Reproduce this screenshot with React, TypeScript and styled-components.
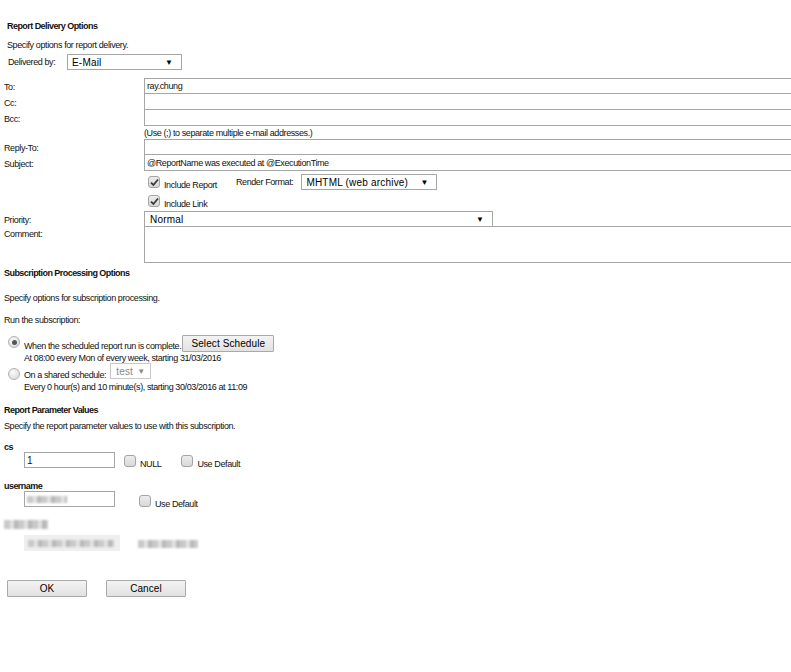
import styled, { createGlobalStyle } from 'styled-components';

const GlobalStyle = createGlobalStyle`
  html, body {
    margin: 0;
    padding: 0;
    background: #ffffff;
    overflow: hidden;
  }
  body {
    font-family: "Liberation Sans", Arial, sans-serif;
    font-size: 9px;
    letter-spacing: -0.4px;
    color: #111;
  }
`;

const Page = styled.div`
  width: 791px;
  height: 672px;
  padding: 20px 0 0 4px;
  box-sizing: border-box;
  overflow: hidden;
`;

const Heading = styled.div<{ $mt?: number; $ml?: number }>`
  font-weight: bold;
  line-height: 12px;
  letter-spacing: -0.55px;
  margin-top: ${(p) => p.$mt ?? 0}px;
  margin-left: ${(p) => p.$ml ?? 0}px;
`;

const Text = styled.div<{ $mt?: number; $ml?: number }>`
  line-height: 12px;
  margin-top: ${(p) => p.$mt ?? 0}px;
  margin-left: ${(p) => p.$ml ?? 0}px;
  white-space: nowrap;
  flex-shrink: 0;
`;

const Row = styled.div<{ $mt?: number; $ml?: number; $gap?: number; $h?: number }>`
  display: flex;
  align-items: flex-start;
  gap: ${(p) => p.$gap ?? 0}px;
  height: ${(p) => (p.$h ? `${p.$h}px` : 'auto')};
  margin-top: ${(p) => p.$mt ?? 0}px;
  margin-left: ${(p) => p.$ml ?? 0}px;
  white-space: nowrap;
`;

const SelectBox = styled.div<{ $w: number; $ml?: number; $mt?: number; $disabled?: boolean }>`
  box-sizing: border-box;
  width: ${(p) => p.$w}px;
  height: 16px;
  margin-left: ${(p) => p.$ml ?? 0}px;
  margin-top: ${(p) => p.$mt ?? 0}px;
  border: 1px solid ${(p) => (p.$disabled ? '#c8c8c8' : '#a6a6a6')};
  background: #fff;
  display: flex;
  align-items: center;
  justify-content: space-between;
  padding: 0 8px 0 4px;
  font-family: "Liberation Sans", Arial, sans-serif;
  font-size: 10px;
  letter-spacing: 0.2px;
  color: ${(p) => (p.$disabled ? '#8a8a8a' : '#000')};
  flex-shrink: 0;
`;

const Arrow = styled.span<{ $disabled?: boolean }>`
  font-size: 8px;
  letter-spacing: 0;
  color: ${(p) => (p.$disabled ? '#8a8a8a' : '#000')};
`;

const FieldGrid = styled.div`
  display: grid;
  grid-template-columns: 140px 720px;
  margin-top: 8px;
`;

const FieldLabel = styled.div<{ $top?: boolean }>`
  display: flex;
  align-items: ${(p) => (p.$top ? 'flex-start' : 'center')};
  padding-top: ${(p) => (p.$top ? 1 : 1)}px;
  line-height: 12px;
`;

const TextBox = styled.div<{ $h?: number; $first?: boolean }>`
  box-sizing: border-box;
  height: ${(p) => p.$h ?? 17}px;
  width: 100%;
  border: 1px solid #a6a6a6;
  margin-top: ${(p) => (p.$first ? 0 : -1)}px;
  background: #fff;
  display: flex;
  align-items: center;
  padding-left: 2px;
  line-height: 12px;
`;

const Hint = styled.div`
  height: 13px;
  line-height: 14px;
`;

const CheckRow = styled.div<{ $h: number }>`
  display: flex;
  align-items: flex-start;
  height: ${(p) => p.$h}px;
  padding-left: 4px;
`;

const BoxWrap = styled.label<{ $mt?: number; $ml?: number }>`
  display: flex;
  align-items: flex-start;
  gap: 4px;
  margin-top: ${(p) => p.$mt ?? 0}px;
  margin-left: ${(p) => p.$ml ?? 0}px;
  flex-shrink: 0;
`;

const Box = styled.span`
  box-sizing: border-box;
  width: 12px;
  height: 12px;
  border-radius: 3px;
  border: 1px solid #a4a4a4;
  background: linear-gradient(#ececec, #d8d8d8);
  display: flex;
  align-items: center;
  justify-content: center;
  flex-shrink: 0;
`;

const BoxText = styled.span`
  line-height: 12px;
  margin-top: 3px;
`;

const Radio = styled.span<{ $checked?: boolean; $mt?: number }>`
  box-sizing: border-box;
  width: 12px;
  height: 12px;
  margin-top: ${(p) => p.$mt ?? 0}px;
  border-radius: 50%;
  border: 1px solid #b0b0b0;
  background: radial-gradient(circle at 40% 35%, #fafafa, #d6d6d6);
  display: flex;
  align-items: center;
  justify-content: center;
  flex-shrink: 0;

  &::after {
    content: '';
    display: ${(p) => (p.$checked ? 'block' : 'none')};
    width: 5px;
    height: 5px;
    border-radius: 50%;
    background: #555;
  }
`;

const Button = styled.button<{ $w: number; $ml?: number }>`
  box-sizing: border-box;
  width: ${(p) => p.$w}px;
  height: 17px;
  margin-left: ${(p) => p.$ml ?? 0}px;
  padding: 0;
  border: 1px solid #a9a9a9;
  border-radius: 1px;
  background: linear-gradient(#f3f3f3, #e2e2e2);
  font-family: "Liberation Sans", Arial, sans-serif;
  font-size: 10px;
  letter-spacing: 0.1px;
  color: #000;
  flex-shrink: 0;
`;

const ParamInput = styled.div`
  box-sizing: border-box;
  width: 91px;
  height: 16px;
  border: 1px solid #a6a6a6;
  display: flex;
  align-items: center;
  padding-left: 2px;
  font-size: 10px;
  flex-shrink: 0;
`;

const Blur = styled.span<{ $w: number; $h?: number }>`
  display: inline-block;
  width: ${(p) => p.$w}px;
  height: ${(p) => p.$h ?? 8}px;
  background: repeating-linear-gradient(90deg, #c9c9c9 0 6px, #e2e2e2 6px 10px, #b8b8b8 10px 14px);
  filter: blur(1px);
`;

const BlurField = styled.div<{ $w: number }>`
  width: ${(p) => p.$w}px;
  height: 16px;
  background: #efefef;
  display: flex;
  align-items: center;
  padding-left: 4px;
  box-sizing: border-box;
  filter: blur(0.6px);
`;

const Check = () => (
  <svg width="9" height="9" viewBox="0 0 9 9">
    <path d="M1 4.6 L3.4 7 L8 1.5" fill="none" stroke="#3a3a3a" strokeWidth="1.8" />
  </svg>
);

export default function App() {
  return (
    <>
      <GlobalStyle />
      <Page>
        <Heading $ml={3}>Report Delivery Options</Heading>
        <Text $mt={7} $ml={3}>Specify options for report delivery.</Text>
        <Row $mt={3} $ml={4}>
          <Text $mt={2} style={{ width: 59 }}>Delivered by:</Text>
          <SelectBox $w={115}>
            E-Mail<Arrow>▼</Arrow>
          </SelectBox>
        </Row>

        <FieldGrid>
          <FieldLabel>To:</FieldLabel>
          <TextBox $first $h={16}>ray.chung</TextBox>
          <FieldLabel>Cc:</FieldLabel>
          <TextBox />
          <FieldLabel>Bcc:</FieldLabel>
          <TextBox />
          <div />
          <Hint>(Use (;) to separate multiple e-mail addresses.)</Hint>
          <FieldLabel>Reply-To:</FieldLabel>
          <TextBox $first $h={16} />
          <FieldLabel>Subject:</FieldLabel>
          <TextBox>@ReportName was executed at @ExecutionTime</TextBox>
          <div />
          <CheckRow $h={20}>
            <BoxWrap $mt={5}>
              <Box><Check /></Box>
              <BoxText>Include Report</BoxText>
            </BoxWrap>
            <Text $ml={19} $mt={5}>Render Format:</Text>
            <SelectBox $w={136} $ml={8} $mt={3}>
              MHTML (web archive)<Arrow>▼</Arrow>
            </SelectBox>
          </CheckRow>
          <div />
          <CheckRow $h={20}>
            <BoxWrap $mt={4}>
              <Box><Check /></Box>
              <BoxText>Include Link</BoxText>
            </BoxWrap>
          </CheckRow>
          <FieldLabel>Priority:</FieldLabel>
          <SelectBox $w={349} style={{ paddingLeft: 5 }}>
            Normal<Arrow>▼</Arrow>
          </SelectBox>
          <FieldLabel $top>Comment:</FieldLabel>
          <TextBox $h={37} />
        </FieldGrid>

        <Heading $mt={4}>Subscription Processing Options</Heading>
        <Text $mt={13}>Specify options for subscription processing.</Text>
        <Text $mt={10}>Run the subscription:</Text>

        <Row $mt={9} $ml={4} $h={17}>
          <Radio $checked $mt={1} />
          <Text $ml={4} $mt={5}>When the scheduled report run is complete.</Text>
          <Button $w={92} $ml={1}>Select Schedule</Button>
        </Row>
        <Text $ml={20}>At 08:00 every Mon of every week, starting 31/03/2016</Text>
        <Row $mt={-1} $ml={4} $h={18}>
          <Radio $mt={5} />
          <Text $ml={4} $mt={6}>On a shared schedule:</Text>
          <SelectBox $w={41} $ml={4} $disabled style={{ padding: '0 5px' }}>
            test<Arrow $disabled>▼</Arrow>
          </SelectBox>
        </Row>
        <Text $ml={20}>Every 0 hour(s) and 10 minute(s), starting 30/03/2016 at 11:09</Text>

        <Heading $mt={11}>Report Parameter Values</Heading>
        <Text $mt={4}>Specify the report parameter values to use with this subscription.</Text>

        <Heading $mt={9}>cs</Heading>
        <Row $mt={-1} $ml={20} $h={16}>
          <ParamInput>1</ParamInput>
          <BoxWrap $mt={3} $ml={9}>
            <Box />
            <BoxText>NULL</BoxText>
          </BoxWrap>
          <BoxWrap $mt={3} $ml={20}>
            <Box />
            <BoxText>Use Default</BoxText>
          </BoxWrap>
        </Row>

        <Heading $mt={12}>username</Heading>
        <Row $mt={-1} $ml={20} $h={17}>
          <ParamInput>
            <Blur $w={40} $h={7} />
          </ParamInput>
          <BoxWrap $mt={4} $ml={24}>
            <Box />
            <BoxText>Use Default</BoxText>
          </BoxWrap>
        </Row>

        <Row $mt={12}>
          <Blur $w={44} $h={9} />
        </Row>
        <Row $mt={6} $ml={20} $gap={18}>
          <BlurField $w={96}>
            <Blur $w={86} $h={7} />
          </BlurField>
          <Blur $w={60} $h={8} style={{ marginTop: 5 }} />
        </Row>

        <Row $mt={29} $ml={3} $gap={19}>
          <Button $w={80}>OK</Button>
          <Button $w={80}>Cancel</Button>
        </Row>
      </Page>
    </>
  );
}
